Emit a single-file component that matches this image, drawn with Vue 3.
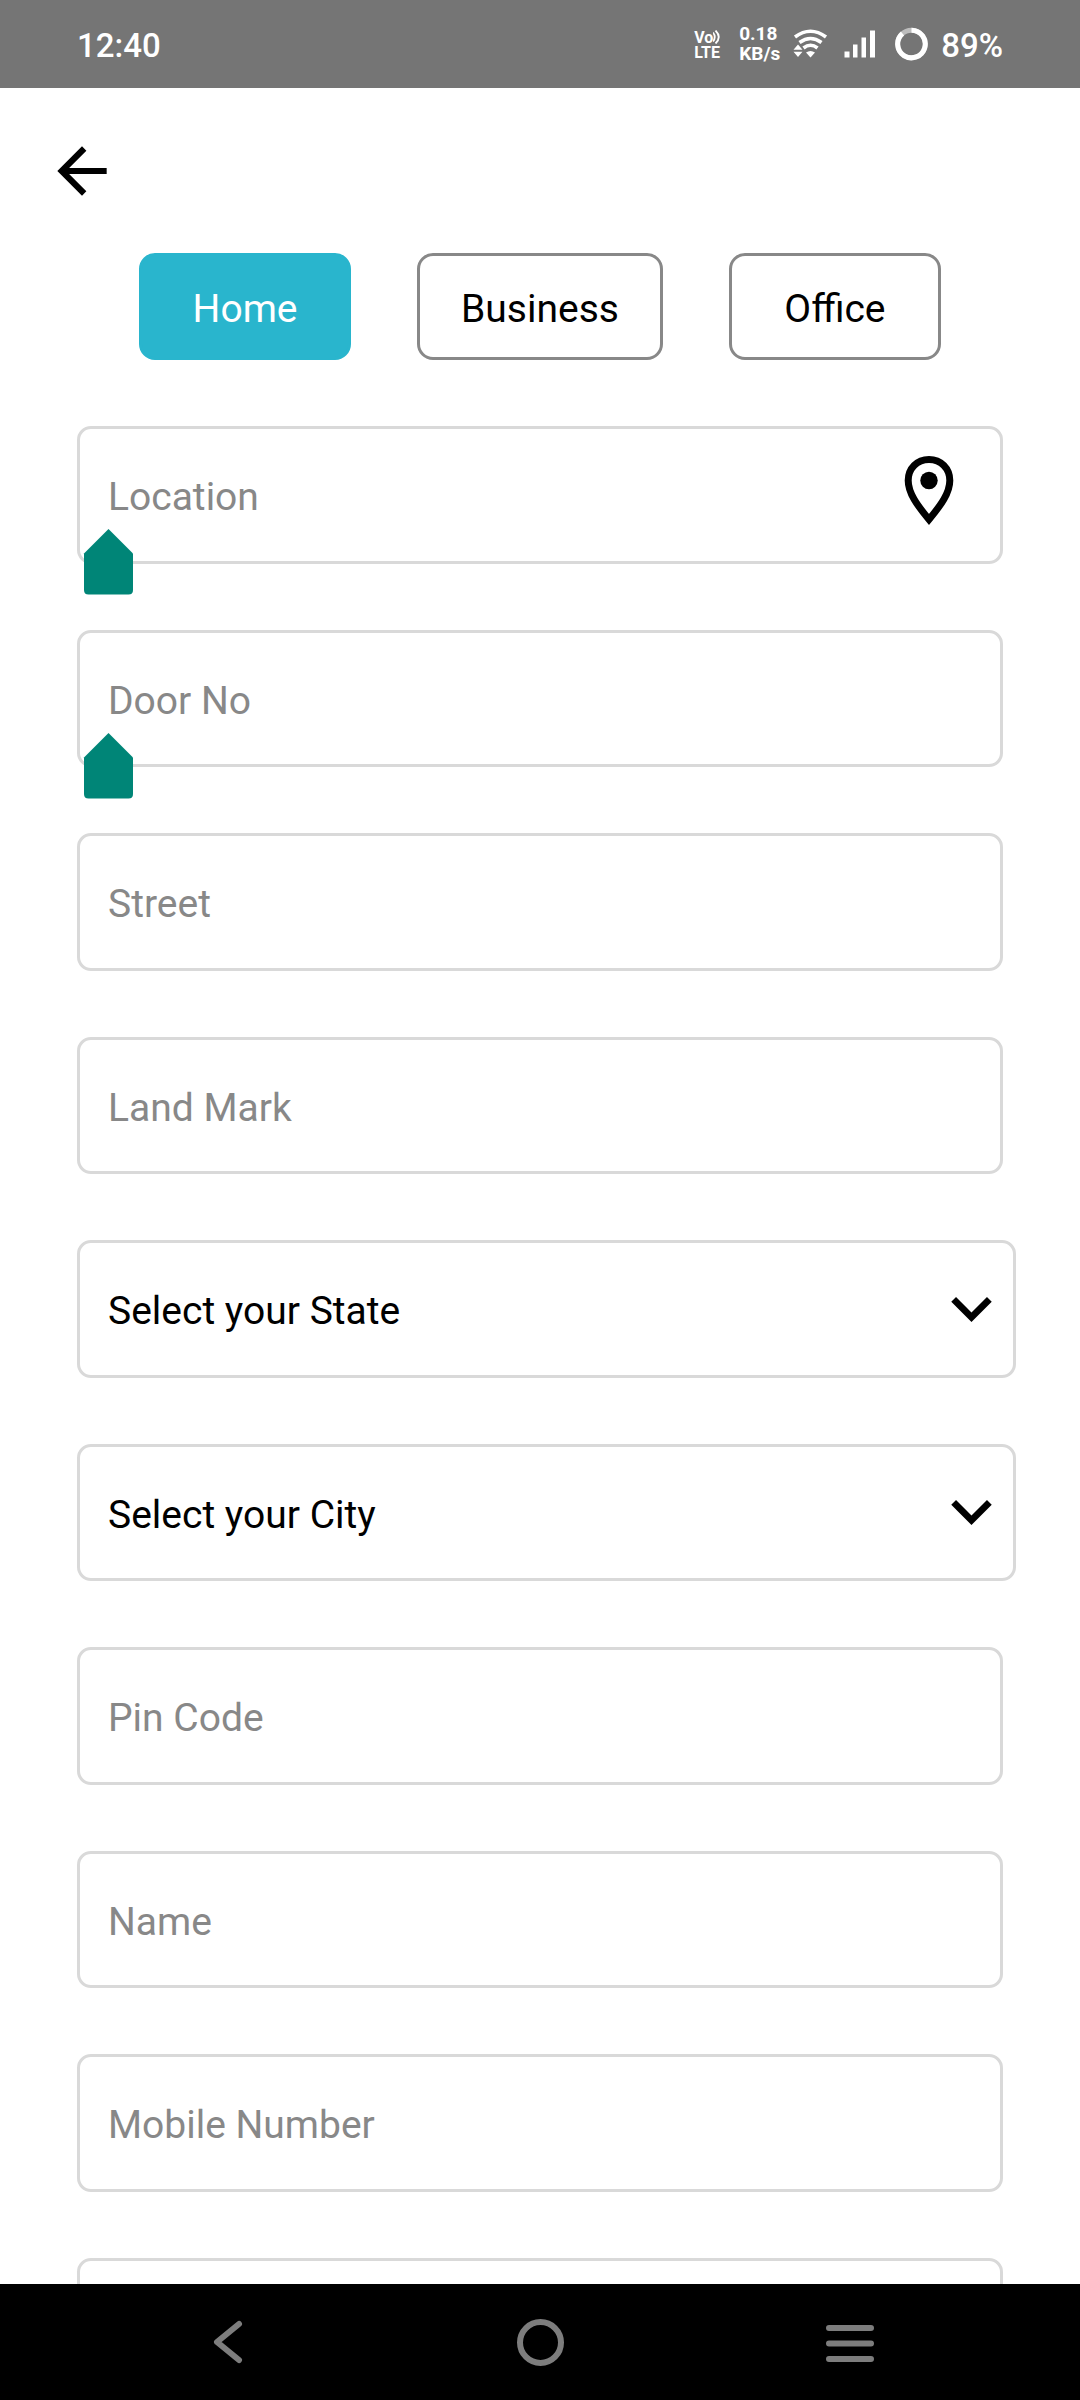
<script setup>
import { ref } from 'vue'

const kinds = ['Home', 'Business', 'Office']
const active = ref('Home')

const fields = ref([
  { id: 'location', label: 'Location', type: 'text', value: '', pin: true, handle: true },
  { id: 'door', label: 'Door No', type: 'text', value: '', handle: true },
  { id: 'street', label: 'Street', type: 'text', value: '' },
  { id: 'landmark', label: 'Land Mark', type: 'text', value: '' },
  { id: 'state', label: 'Select your State', type: 'select', value: '' },
  { id: 'city', label: 'Select your City', type: 'select', value: '' },
  { id: 'pincode', label: 'Pin Code', type: 'text', value: '' },
  { id: 'name', label: 'Name', type: 'text', value: '' },
  { id: 'mobile', label: 'Mobile Number', type: 'tel', value: '' },
  { id: 'extra', label: '', type: 'text', value: '' }
])
</script>

<template>
  <div class="screen">
    <header class="status">
      <span class="clock">12:40</span>
      <div class="indicators">
        <div class="volte">
          <span class="vo">Vo<svg width="8" height="14" viewBox="0 0 8 14" aria-hidden="true"><path d="M0 2.5Q3.5 7 0 11.500M2.500 0.500Q9 7 2.500 13.500" fill="none" stroke="#fff" stroke-width="1.800" /></svg></span>
          <span>LTE</span>
        </div>
        <div class="speed"><span>0.18</span><span>KB/s</span></div>
        <svg width="36" height="30" viewBox="0 0 36 30" aria-hidden="true">
          <g fill="none" stroke="#fff" stroke-width="3.600">
            <path d="M2 8Q17.500 -3.500 33 8" />
            <path d="M6.500 13.500Q17.500 5.500 28.500 13.500" />
            <path d="M10.500 19Q17.500 13.500 24.500 19" />
          </g>
          <path d="M13 23.500Q17.500 20.500 22 23.500L17.500 28.500Z" fill="#fff" />
          <path d="M5 15.500L9.500 20.700H0.500ZM5 28L9.500 22.800H0.500Z" fill="#fff" />
        </svg>
        <svg width="37" height="30" viewBox="0 0 37 30" fill="#fff" aria-hidden="true">
          <path d="M1.500 22.500h5v6h-5zM10 15.500h4.500v13H10zM18.500 8.500H23v20h-4.500zM27 1.500h5v27h-5z" />
        </svg>
        <svg width="34" height="34" viewBox="0 0 34 34" aria-hidden="true">
          <circle cx="17.500" cy="17" r="13.800" fill="none" stroke="#bdbdbd" stroke-width="5" />
          <path d="M17.500 3.200A13.800 13.800 0 1 1 8.500 6.500" fill="none" stroke="#fff" stroke-width="5" />
        </svg>
      </div>
      <span class="percent">89%</span>
    </header>

    <main class="page">
      <button class="back" type="button" aria-label="Back">
        <svg width="74" height="74" viewBox="0 0 24 24" aria-hidden="true">
          <path d="M20 11H7.830l5.590-5.590L12 4l-8 8 8 8 1.410-1.410L7.830 13H20z" />
        </svg>
      </button>

      <div class="kinds">
        <button
          v-for="kind in kinds"
          :key="kind"
          type="button"
          class="kind"
          :class="{ active: kind === active }"
          :aria-pressed="kind === active"
          @click="active = kind"
        >{{ kind }}</button>
      </div>

      <form class="form" @submit.prevent>
        <div v-for="f in fields" :key="f.id" class="field" :class="{ wide: f.type === 'select' }">
          <template v-if="f.type === 'select'">
            <select :id="f.id" v-model="f.value" class="control" :aria-label="f.label">
              <option value="">{{ f.label }}</option>
            </select>
            <svg class="chevron" width="41" height="25" viewBox="6 8.590 12 7.410" aria-hidden="true">
              <path d="M7.410 8.590L12 13.170l4.590-4.580L18 10l-6 6-6-6z" />
            </svg>
          </template>
          <input
            v-else
            :id="f.id"
            v-model="f.value"
            class="control"
            :type="f.type"
            :placeholder="f.label"
            :aria-label="f.label || 'Additional details'"
          />
          <button v-if="f.pin" class="pin" type="button" aria-label="Pick on map">
            <svg width="50" height="70" viewBox="0 0 50 70" aria-hidden="true">
              <path d="M25 3.500C13 3.500 4.200 12.600 4.200 24.500C4.200 37 13 49 25 63.500C37 49 45.800 37 45.800 24.500C45.800 12.600 37 3.500 25 3.500Z" fill="none" stroke="#000" stroke-width="7" />
              <circle cx="25" cy="24.500" r="8.700" />
            </svg>
          </button>
          <svg v-if="f.handle" class="handle" width="50" height="66" viewBox="0 0 50 66" aria-hidden="true">
            <path d="M25.500 0L50 24.500V61Q50 65.500 45.500 65.500H5.500Q1 65.500 1 61V24.500Z" fill="#008577" />
          </svg>
        </div>
      </form>
    </main>

    <nav class="navbar">
      <button type="button" aria-label="Back">
        <svg width="50" height="50" viewBox="0 0 50 50" aria-hidden="true">
          <path d="M35 7L13 25L35 43" />
        </svg>
      </button>
      <button type="button" aria-label="Home">
        <svg width="50" height="50" viewBox="0 0 50 50" aria-hidden="true">
          <circle cx="25.500" cy="25.500" r="20.500" />
        </svg>
      </button>
      <button type="button" aria-label="Recent apps">
        <svg width="50" height="50" viewBox="0 0 50 50" aria-hidden="true">
          <path d="M3 11H45M3 26.500H45M3 42H45" />
        </svg>
      </button>
    </nav>
  </div>
</template>

<style>
body {
  background: #fff;
}
</style>

<style scoped>
.screen {
  display: flex;
  flex-direction: column;
  height: 100vh;
  font-family: Roboto, "Liberation Sans", sans-serif;
  font-size: 39px;
  color: #000;
}

button {
  margin: 0;
  padding: 0;
  border: 0;
  background: none;
  font: inherit;
  color: inherit;
}

svg {
  display: block;
  flex: none;
}

.status {
  display: flex;
  flex: none;
  align-items: center;
  height: 88px;
  padding: 0 77px;
  background: #757575;
  color: #fff;
}

.clock,
.percent {
  padding-top: 4px;
  font-size: 33px;
  font-weight: 500;
  line-height: 40px;
}

.indicators {
  display: flex;
  align-items: center;
  gap: 14px;
  margin: 0 13px 0 auto;
}

.volte {
  display: flex;
  flex-direction: column;
  width: 31px;
  padding-top: 2px;
  font-size: 16px;
  font-weight: 700;
  line-height: 15px;
}

.vo {
  display: flex;
}

.speed {
  display: flex;
  flex-direction: column;
  width: 40px;
  font-size: 19px;
  font-weight: 700;
  line-height: 20px;
}

.page {
  flex: 1;
  min-height: 0;
  overflow: hidden;
  padding: 46px 77px 0;
}

.back {
  display: block;
  margin-left: -32px;
}

.kinds {
  display: flex;
  justify-content: center;
  gap: 66px;
  margin-top: 45px;
}

.kind {
  min-width: 212px;
  height: 107px;
  padding: 5px 41px 0;
  border: 3px solid #888;
  border-radius: 16px;
}

.kind.active {
  border-color: #29b5cd;
  background: #29b5cd;
  color: #fff;
}

.form {
  display: flex;
  flex-direction: column;
  gap: 66px;
  margin-top: 66px;
}

.field {
  position: relative;
  display: flex;
  flex: none;
  align-items: center;
  height: 138px;
  box-sizing: border-box;
  border: 3px solid #d9d9d9;
  border-radius: 14px;
}

.field:nth-child(even) {
  height: 137px;
}

.field.wide {
  margin-right: -13px;
}

.control {
  flex: 1;
  min-width: 0;
  height: 100%;
  box-sizing: border-box;
  margin: 0;
  padding: 4px 28px 0;
  border: 0;
  outline: 0;
  background: none;
  font: inherit;
  color: #000;
  appearance: none;
}

.control::placeholder {
  color: #888;
  opacity: 1;
}

.chevron {
  position: absolute;
  right: 21px;
  pointer-events: none;
}

.pin {
  margin: 0 46px 8px 0;
}

.handle {
  position: absolute;
  left: 3px;
  top: 100px;
  z-index: 1;
}

.navbar {
  display: grid;
  flex: none;
  grid-template-columns: repeat(3, 1fr);
  align-items: center;
  justify-items: center;
  height: 116px;
  padding: 0 73px;
  background: #000;
}

.navbar svg {
  fill: none;
  stroke: #7d7d7d;
  stroke-width: 6px;
  stroke-linecap: round;
  stroke-linejoin: round;
}
</style>
